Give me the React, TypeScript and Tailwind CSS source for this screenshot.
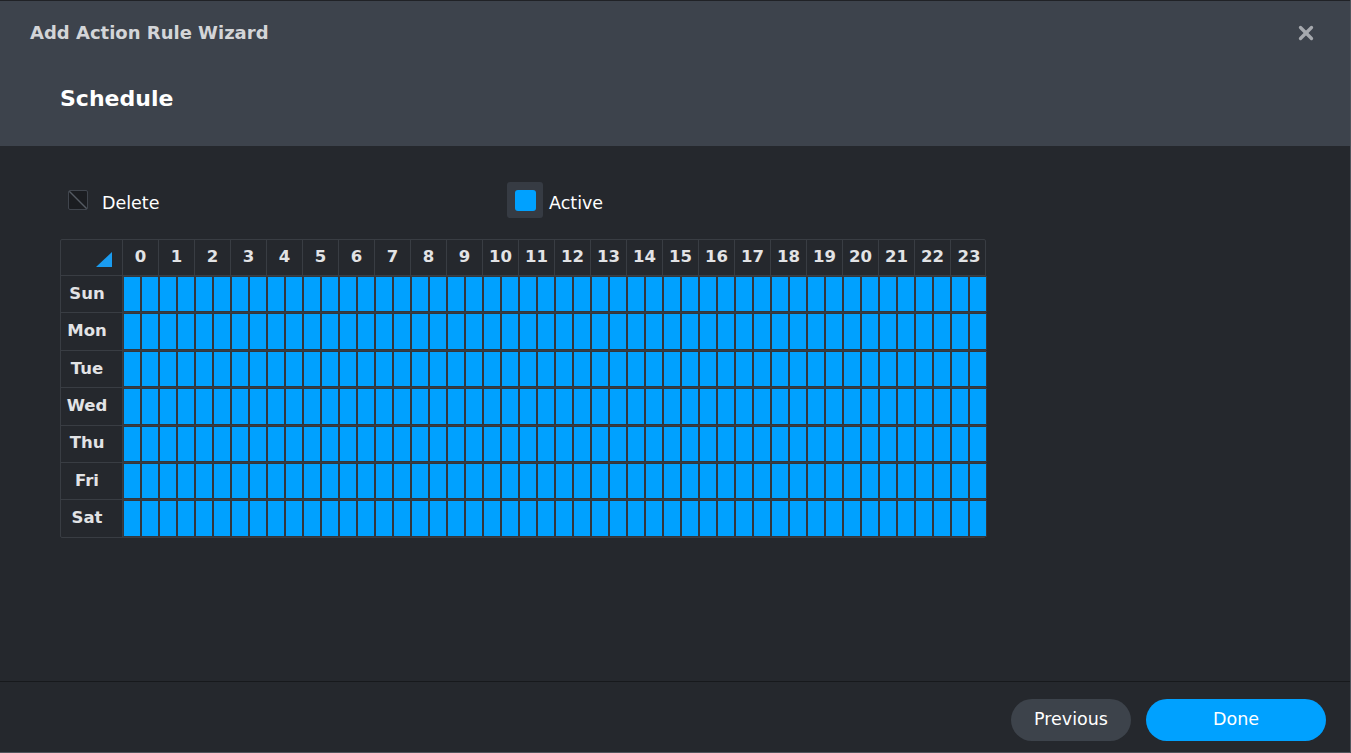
import { X } from 'lucide-react';

const HOURS = Array.from({ length: 24 }, (_, i) => i);
const DAYS = ['Sun', 'Mon', 'Tue', 'Wed', 'Thu', 'Fri', 'Sat'];

function ScheduleGrid() {
  return (
    <div className="w-[926px] border border-[#393d43] rounded-[2px] bg-[#25282d]">
      {/* hour header */}
      <div className="flex h-[35px]">
        <div className="w-[62px] shrink-0 flex items-end justify-end pr-[10px] pb-[8px] border-r border-[#393d43]">
          <svg width="16" height="15" viewBox="0 0 16 15">
            <polygon points="16,0 16,15 0,15" fill="#1a9cf0" />
          </svg>
        </div>
        {HOURS.map((h) => (
          <div
            key={h}
            className="w-[36px] shrink-0 flex items-center justify-center border-r border-[#393d43] last:border-r-0 text-[16.5px] font-bold text-[#e2e3e5]"
          >
            {h}
          </div>
        ))}
      </div>
      {DAYS.map((d) => (
        <div key={d} className="flex h-[37.4px] border-t border-[#393d43]">
          <div className="w-[62px] shrink-0 flex items-center justify-center pr-[9px] border-r border-[#393d43] text-[16.5px] font-bold text-[#e2e3e5]">
            {d}
          </div>
          {Array.from({ length: 48 }, (_, i) => (
            <div key={i} className="w-[18px] shrink-0 border border-[#33373d] bg-[#00a1ff]" />
          ))}
        </div>
      ))}
    </div>
  );
}

export default function App() {
  return (
    <div
      className="w-[1351px] h-[753px] flex flex-col bg-[#25282d] border-r border-b border-[#50555c] overflow-hidden"
      style={{ fontFamily: '"DejaVu Sans", Verdana, sans-serif' }}
    >
      {/* header */}
      <div className="h-[146px] shrink-0 bg-[#3d434c] border-t border-[#202226] flex flex-col">
        <div className="flex items-center justify-between h-[63px] pl-[30px] pr-[33px]">
          <span className="text-[18px] font-bold text-[#d3d5d8]">Add Action Rule Wizard</span>
          <X size={22} strokeWidth={3.6} className="text-[#a6a9ae]" />
        </div>
        <div className="pl-[60px] pt-[18px]">
          <span className="text-[22px] font-bold text-white">Schedule</span>
        </div>
      </div>

      {/* body */}
      <div className="flex-1 pl-[60px] pt-[36px]">
        <div className="flex items-center h-[36px]">
          <div className="flex items-center w-[447px] pl-[8px]">
            <span className="relative w-[20px] h-[20px] rounded-[2px] border border-[#40454d] bg-[#1b1d21] overflow-hidden">
              <svg className="absolute inset-0" width="20" height="20" viewBox="0 0 20 20">
                <line x1="0" y1="0" x2="20" y2="20" stroke="#555b63" strokeWidth="1.4" />
              </svg>
            </span>
            <span className="ml-[14px] pt-[6px] text-[17.5px] text-white">Delete</span>
          </div>
          <div className="flex items-center">
            <span className="w-[36px] h-[36px] rounded-[3px] bg-[#363b43] flex items-center justify-center">
              <span className="w-[21px] h-[21px] rounded-[3px] bg-[#00a1ff]" />
            </span>
            <span className="ml-[6px] pt-[6px] text-[17.5px] text-white">Active</span>
          </div>
        </div>
        <div className="mt-[21px]">
          <ScheduleGrid />
        </div>
      </div>

      {/* footer */}
      <div className="h-[71px] shrink-0 border-t border-[#17191c] flex items-center justify-end gap-[15px] pr-[24px] pt-[5px]">
        <button className="w-[120px] h-[42px] rounded-full bg-[#3d434b] text-[17.5px] text-white">
          Previous
        </button>
        <button className="w-[180px] h-[42px] rounded-full bg-[#00a1ff] text-[17.5px] text-white">
          Done
        </button>
      </div>
    </div>
  );
}
